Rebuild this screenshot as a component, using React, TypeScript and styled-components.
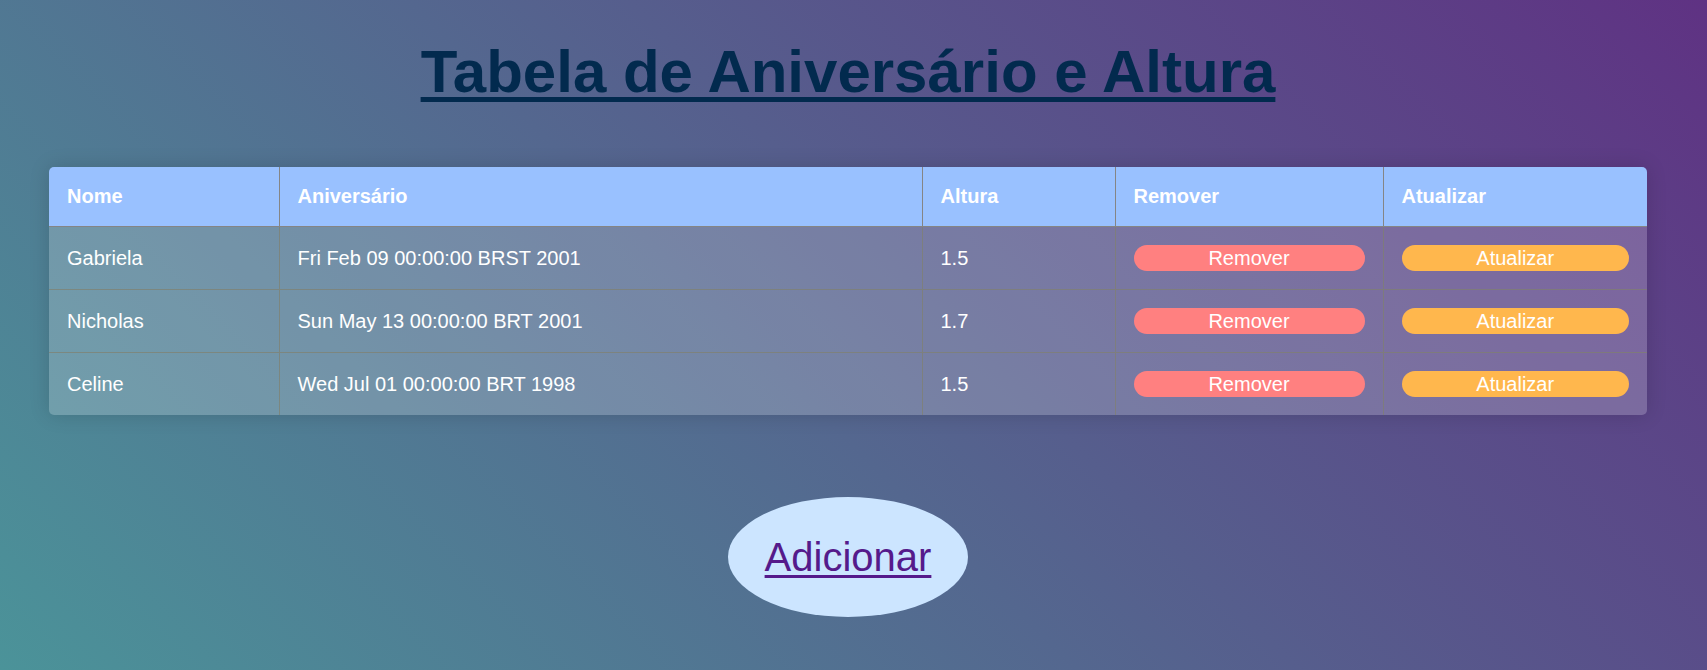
import React from "react";
import styled, { createGlobalStyle } from "styled-components";

const GlobalStyle = createGlobalStyle`
  html, body {
    margin: 0;
    padding: 0;
  }
  body {
    font-family: "Liberation Sans", Arial, sans-serif;
  }
`;

const Page = styled.div`
  min-height: 100vh;
  box-sizing: border-box;
  padding: 37px 60px 40px 49px;
  background: linear-gradient(45deg, #4b9399 0%, #5f3283 100%);
  display: flex;
  flex-direction: column;
  align-items: stretch;
`;

const Title = styled.h1`
  align-self: center;
  margin: 0 0 61px;
  font-family: "Liberation Sans", Arial, sans-serif;
  font-size: 60px;
  font-weight: 700;
  color: #022a4e;
  text-decoration: underline;
  text-underline-offset: 5px;
  text-decoration-thickness: 5px;
  text-align: center;
`;

const Table = styled.table`
  width: 100%;
  table-layout: fixed;
  border-collapse: collapse;
  border-radius: 5px;
  overflow: hidden;
  box-shadow: 0 0 20px rgba(0, 0, 0, 0.15);
  font-family: "Liberation Sans", Arial, sans-serif;
  font-size: 20px;
  color: #ffffff;
`;

const Col = styled.col<{ $w: number }>`
  width: ${(p) => p.$w}px;
`;

const HeadRow = styled.tr`
  background: #99c1ff;
  border-bottom: 1px solid #858585;
`;

const Th = styled.th`
  box-sizing: border-box;
  padding: 18px;
  text-align: left;
  font-weight: 700;
  line-height: 23px;
  & + & {
    border-left: 1px solid #858585;
  }
`;

const BodyRow = styled.tr`
  background: rgba(255, 255, 255, 0.2);
  & + & {
    border-top: 1px solid rgba(128, 128, 110, 0.7);
  }
`;

const Td = styled.td`
  box-sizing: border-box;
  padding: 18px;
  line-height: 23px;
  white-space: nowrap;
  & + & {
    border-left: 1px solid rgba(128, 128, 110, 0.7);
  }
`;

const PillButton = styled.button<{ $color: string }>`
  display: block;
  width: 100%;
  box-sizing: border-box;
  height: 26px;
  padding: 1px 6px;
  border: none;
  border-radius: 13px;
  background: ${(p) => p.$color};
  color: #ffffff;
  font-family: "Liberation Sans", Arial, sans-serif;
  font-size: 20px;
  line-height: 23px;
  cursor: pointer;
`;

const AddButton = styled.a`
  align-self: center;
  margin-top: 82px;
  display: inline-flex;
  align-items: center;
  justify-content: center;
  width: 240px;
  height: 120px;
  border-radius: 50%;
  background: #cce5ff;
  color: #551a8b;
  font-family: "Liberation Sans", Arial, sans-serif;
  font-size: 40px;
  text-decoration: underline;
  text-decoration-thickness: 3px;
  text-underline-offset: 4px;
  cursor: pointer;
`;

const rows = [
  { nome: "Gabriela", aniversario: "Fri Feb 09 00:00:00 BRST 2001", altura: "1.5" },
  { nome: "Nicholas", aniversario: "Sun May 13 00:00:00 BRT 2001", altura: "1.7" },
  { nome: "Celine", aniversario: "Wed Jul 01 00:00:00 BRT 1998", altura: "1.5" },
];

const columns = [
  { label: "Nome", w: 230 },
  { label: "Aniversário", w: 643 },
  { label: "Altura", w: 193 },
  { label: "Remover", w: 268 },
  { label: "Atualizar", w: 264 },
];

export default function App() {
  return (
    <>
      <GlobalStyle />
      <Page>
        <Title>Tabela de Aniversário e Altura</Title>
        <Table>
          <colgroup>
            {columns.map((c) => (
              <Col key={c.label} $w={c.w} />
            ))}
          </colgroup>
          <thead>
            <HeadRow>
              {columns.map((c) => (
                <Th key={c.label}>{c.label}</Th>
              ))}
            </HeadRow>
          </thead>
          <tbody>
            {rows.map((r) => (
              <BodyRow key={r.nome}>
                <Td>{r.nome}</Td>
                <Td>{r.aniversario}</Td>
                <Td>{r.altura}</Td>
                <Td>
                  <PillButton $color="#ff8080">Remover</PillButton>
                </Td>
                <Td>
                  <PillButton $color="#ffb74d">Atualizar</PillButton>
                </Td>
              </BodyRow>
            ))}
          </tbody>
        </Table>
        <AddButton>Adicionar</AddButton>
      </Page>
    </>
  );
}
